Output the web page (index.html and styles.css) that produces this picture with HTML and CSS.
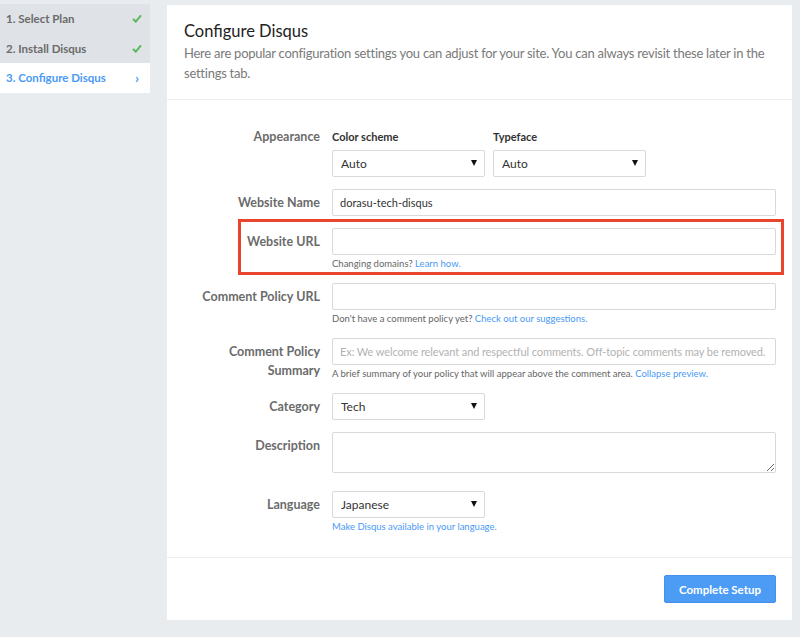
FILE: index.html
```html
<!DOCTYPE html>
<html>
<head>
<meta charset="utf-8">
<link rel="stylesheet" href="styles.css">
</head>
<body>
<div class="page">
  <ul class="steps">
    <li class="step done"><span>1. Select Plan</span><svg class="check" viewBox="0 0 10 9" width="10" height="9"><path d="M1 5 L3.8 7.6 L9 1.4" fill="none" stroke="#5cb85c" stroke-width="2"/></svg></li>
    <li class="step done"><span>2. Install Disqus</span><svg class="check" viewBox="0 0 10 9" width="10" height="9"><path d="M1 5 L3.8 7.6 L9 1.4" fill="none" stroke="#5cb85c" stroke-width="2"/></svg></li>
    <li class="step active"><span>3. Configure Disqus</span><span class="chev">›</span></li>
  </ul>
  <div class="card">
    <div class="card-head">
      <h1 class="title">Configure Disqus</h1>
      <p class="lead">Here are popular configuration settings you can adjust for your site. You can always revisit these later in the settings tab.</p>
    </div>
    <form class="form">
      <div class="row">
        <label class="lbl lbl-top">Appearance</label>
        <div class="ctrl pair">
          <div class="sub">
            <div class="sublbl">Color scheme</div>
            <div class="selwrap"><select class="sel"><option>Auto</option></select></div>
          </div>
          <div class="sub">
            <div class="sublbl">Typeface</div>
            <div class="selwrap"><select class="sel"><option>Auto</option></select></div>
          </div>
        </div>
      </div>
      <div class="row">
        <label class="lbl">Website Name</label>
        <div class="ctrl"><input class="inp" type="text" value="dorasu-tech-disqus"></div>
      </div>
      <div class="row marked">
        <label class="lbl">Website URL</label>
        <div class="ctrl">
          <input class="inp" type="text">
          <div class="help">Changing domains? <a>Learn how.</a></div>
        </div>
        <div class="mark"></div>
      </div>
      <div class="row">
        <label class="lbl">Comment Policy URL</label>
        <div class="ctrl">
          <input class="inp" type="text">
          <div class="help">Don't have a comment policy yet? <a>Check out our suggestions.</a></div>
        </div>
      </div>
      <div class="row">
        <label class="lbl">Comment Policy<br>Summary</label>
        <div class="ctrl">
          <input class="inp" type="text" placeholder="Ex: We welcome relevant and respectful comments. Off-topic comments may be removed.">
          <div class="help">A brief summary of your policy that will appear above the comment area. <a>Collapse preview.</a></div>
        </div>
      </div>
      <div class="row">
        <label class="lbl">Category</label>
        <div class="ctrl"><div class="selwrap"><select class="sel"><option>Tech</option></select></div></div>
      </div>
      <div class="row row-desc">
        <label class="lbl">Description</label>
        <div class="ctrl"><textarea class="txt"></textarea></div>
      </div>
      <div class="row">
        <label class="lbl">Language</label>
        <div class="ctrl">
          <div class="selwrap"><select class="sel"><option>Japanese</option></select></div>
          <div class="help"><a>Make Disqus available in your language.</a></div>
        </div>
      </div>
    </form>
    <div class="card-foot">
      <button class="btn" type="button">Complete Setup</button>
    </div>
  </div>
</div>
</body>
</html>
```
FILE: styles.css
```css
* { box-sizing: border-box; }
html, body { margin: 0; padding: 0; }
body {
  background: #e9ecef;
  font-family: Lato, "Open Sans", sans-serif;
  color: #333;
  width: 800px;
  height: 637px;
  overflow: hidden;
}
.page {
  display: flex;
  align-items: flex-start;
}
.steps {
  list-style: none;
  margin: 4px 0 0 0;
  padding: 0;
  width: 150px;
  flex: none;
}
.step {
  display: flex;
  align-items: center;
  justify-content: space-between;
  height: 29.5px;
  padding: 0 8px 0 6px;
  font-size: 11.5px;
  font-weight: 700;
  color: #6b6b6b;
  background: #dfe2e6;
}
.step.active {
  background: #fff;
  color: #4a9af5;
}
.chev {
  font-size: 14px;
  color: #4a9af5;
  margin-right: 3px;
}
.card {
  margin: 5px 0 0 17px;
  width: 625px;
  height: 615px;
  background: #fff;
  flex: none;
}
.card-head {
  padding: 14px 17px 16px 17px;
  border-bottom: 1px solid #eceef0;
}
.title {
  margin: 0;
  font-size: 16.5px;
  font-weight: 400;
  color: #222;
  line-height: 24px;
}
.lead {
  margin: 0;
  font-size: 13px;
  letter-spacing: -0.25px;
  line-height: 20px;
  color: #7a7a7a;
}
.form {
  padding: 29px 16px 23px 0;
  margin: 0;
}
.row {
  display: grid;
  grid-template-columns: 153px 444px;
  column-gap: 12px;
  margin-bottom: 12px;
  position: relative;
}
.row:last-child { margin-bottom: 0; }
.lbl {
  text-align: right;
  font-size: 12.5px;
  font-weight: 700;
  color: #6b6b6b;
  line-height: 19px;
  padding-top: 4px;
}
.lbl-top { padding-top: 0; line-height: 16px; }
.ctrl { display: flex; flex-direction: column; align-items: flex-start; }
.pair { flex-direction: row; gap: 8px; }
.sublbl {
  font-size: 11px;
  font-weight: 700;
  color: #333;
  line-height: 16px;
  height: 16px;
  margin-bottom: 5px;
}
.selwrap {
  position: relative;
  width: 153px;
  height: 27px;
}
.selwrap::after {
  content: "";
  position: absolute;
  right: 8px;
  top: 10px;
  border-left: 3.5px solid transparent;
  border-right: 3.5px solid transparent;
  border-top: 6px solid #111;
  pointer-events: none;
}
.sel, .inp, .txt {
  font-family: inherit;
  border: 1px solid #d6d9de;
  border-radius: 2px;
  background: #fff;
  color: #333;
}
.sel {
  -webkit-appearance: none;
  appearance: none;
  width: 153px;
  height: 27px;
  padding: 0 8px;
  display: block;
  font-size: 12px;
}
.inp {
  width: 444px;
  height: 27px;
  padding: 0 7px;
  display: block;
  font-size: 11px;
}
.inp::placeholder { color: #b2b2b2; letter-spacing: -0.1px; }
.txt {
  display: block;
  width: 444px;
  height: 41px;
  resize: vertical;
  margin: 0;
}
.row-desc { margin-bottom: 18px; }
.help {
  margin-top: 2px;
  font-size: 9.5px;
  line-height: 14px;
  height: 14px;
  color: #666;
}
.help a { color: #4a9af5; }
.mark {
  position: absolute;
  left: 71px;
  top: -9px;
  width: 546px;
  height: 56px;
  border: 3px solid #e8452c;
}
.card-foot {
  border-top: 1px solid #eceef0;
  padding: 17px 16px 0 0;
  display: flex;
  justify-content: flex-end;
}
.btn {
  width: 112px;
  height: 28px;
  border: 1px solid #4391ea;
  border-radius: 2px;
  background: #4c9cf5;
  color: #fff;
  font-family: inherit;
  font-weight: 700;
  font-size: 11.5px;
  padding: 0;
}
```
